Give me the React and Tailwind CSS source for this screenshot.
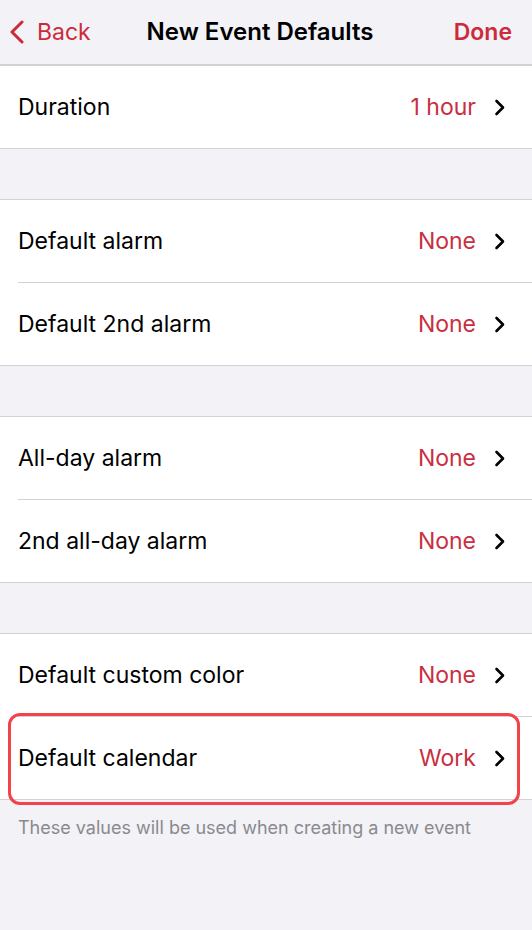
import { Fragment } from "react";

const groups = [
  [{ label: "Duration", value: "1 hour" }],
  [
    { label: "Default alarm", value: "None" },
    { label: "Default 2nd alarm", value: "None" },
  ],
  [
    { label: "All-day alarm", value: "None" },
    { label: "2nd all-day alarm", value: "None" },
  ],
  [
    { label: "Default custom color", value: "None" },
    { label: "Default calendar", value: "Work", marked: true },
  ],
];

function Chevron({ className = "" }) {
  return (
    <svg width="12" height="17" viewBox="0 0 12 17" className={className}>
      <path
        d="M2.5 2 L9 8.5 L2.5 15"
        fill="none"
        stroke="currentColor"
        strokeWidth="2.6"
        strokeLinecap="round"
        strokeLinejoin="round"
      />
    </svg>
  );
}

function Row({ label, value, marked }) {
  return (
    <div className="relative flex h-[82px] items-center pl-[18px] pr-[26px]">
      <span className="flex-1 text-[23px] text-black">{label}</span>
      <span className="mr-[18px] text-[23px] text-[#c92f3f]">{value}</span>
      <Chevron className="text-black" />
      {marked && (
        <div className="pointer-events-none absolute left-[8px] right-[12px] top-[-4px] bottom-[-6px] rounded-[12px] border-[3px] border-[#f2434a]" />
      )}
    </div>
  );
}

export default function App() {
  return (
    <div
      className="min-h-[930px] w-[532px] bg-[#f2f2f7]"
      style={{ fontFamily: "Inter, 'Noto Sans', sans-serif" }}
    >
      {/* nav bar */}
      <div className="flex h-[65px] items-center border-b border-[#d1d1d6] px-[8px]">
        <div className="flex flex-1 items-center gap-[12px] text-[#cc2b3c]">
          <svg width="17" height="24" viewBox="0 0 17 24">
            <path
              d="M14 2 L4 12 L14 22"
              fill="none"
              stroke="currentColor"
              strokeWidth="3"
              strokeLinecap="round"
              strokeLinejoin="round"
            />
          </svg>
          <span className="text-[23px]">Back</span>
        </div>
        <span className="text-[24px] font-semibold text-black">New Event Defaults</span>
        <div className="flex flex-1 justify-end pr-[12px]">
          <span className="text-[23px] font-semibold text-[#cc2b3c]">Done</span>
        </div>
      </div>

      <div className="flex flex-col gap-[50px]">
        {groups.map((rows, gi) => (
          <div key={gi} className="border-y border-[#d1d1d6] bg-white">
            {rows.map((r, ri) => (
              <Fragment key={r.label}>
                {ri > 0 && <div className="ml-[18px] h-px bg-[#d1d1d6]" />}
                <Row {...r} />
              </Fragment>
            ))}
          </div>
        ))}
      </div>

      <p className="px-[18px] pt-[14px] text-[18px] text-[#8a8a8e]">
        These values will be used when creating a new event
      </p>
    </div>
  );
}
